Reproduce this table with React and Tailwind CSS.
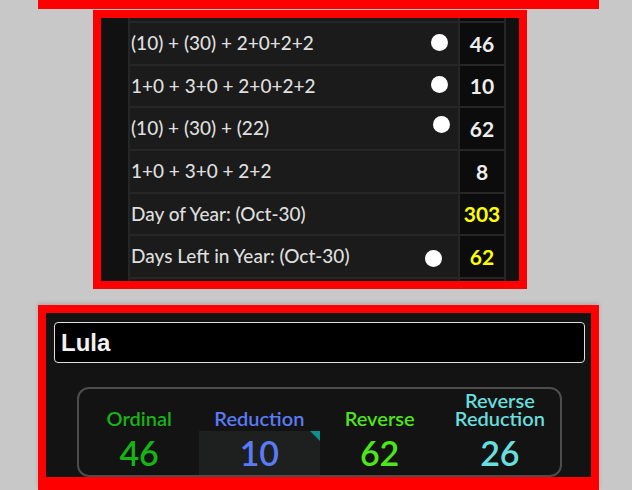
import React from 'react';

const rows = [
  { text: '(10) + (30) + 2+0+2+2', value: '46', dot: 'mr-[10px] -mt-[2px]' },
  { text: '1+0 + 3+0 + 2+0+2+2', value: '10', dot: 'mr-[10px] -mt-[2px]' },
  { text: '(10) + (30) + (22)', value: '62', dot: 'mr-[8px] -mt-[8px]' },
  { text: '1+0 + 3+0 + 2+2', value: '8' },
  { text: 'Day of Year: (Oct-30)', value: '303', yellow: true },
  { text: 'Days Left in Year: (Oct-30)', value: '62', yellow: true, dot: 'mr-[16px] mt-[4px]' },
];

const ciphers = [
  { label: 'Ordinal', value: '46', color: 'text-[#17b317]' },
  { label: 'Reduction', value: '10', color: 'text-[#5a7bf7]', active: true },
  { label: 'Reverse', value: '62', color: 'text-[#4fe619]' },
  { label: 'Reverse Reduction', value: '26', color: 'text-[#68dede]', twoLine: true },
];

const Row = ({ row }) => (
  <div className="flex h-[42.67px] border-t-2 border-[#262626]">
    <div className="flex flex-1 items-center border-l-2 border-[#262626] bg-[#1b1b1b] pl-[1px]">
      <span className="flex-1 text-[19px] font-medium text-[#dedede]">{row.text}</span>
      {row.dot && <span className={`h-[17px] w-[17px] rounded-full bg-white ${row.dot}`}></span>}
    </div>
    <div
      className={`flex w-[48px] items-center justify-center border-l-2 border-r-2 border-[#262626] bg-[#0c0c0c] text-[21px] font-bold ${
        row.yellow ? 'text-[#ffff00]' : 'text-[#eeeeee]'
      }`}
    >
      {row.value}
    </div>
  </div>
);

const App = () => {
  return (
    <div className="min-h-[490px] w-[632px] overflow-hidden bg-[#c8c8c8] font-['Lato',sans-serif]">
      {/* bottom edge of the box above */}
      <div className="ml-[38px] h-[9px] w-[561px] bg-[#ff0000]"></div>

      {/* gematria table */}
      <div className="ml-[93px] mt-[1px] w-[434px] border-8 border-[#ff0000]">
        <div className="flex h-[263px] overflow-hidden bg-[#131313]">
          <div className="w-[27px] bg-[#111111]"></div>
          <div className="flex w-[378px] flex-col">
            <div className="flex h-[3px]">
              <div className="flex-1 border-l-2 border-[#262626] bg-[#1b1b1b]"></div>
              <div className="w-[48px] border-x-2 border-[#262626] bg-[#0c0c0c]"></div>
            </div>
            {rows.map((row, i) => (
              <Row key={i} row={row} />
            ))}
            <div className="flex h-[4px] border-t-2 border-[#262626]">
              <div className="flex-1 border-l-2 border-[#262626] bg-[#1b1b1b]"></div>
              <div className="w-[48px] border-x-2 border-[#262626] bg-[#0c0c0c]"></div>
            </div>
          </div>
          <div className="flex-1 bg-[#111111]"></div>
        </div>
      </div>

      {/* phrase + cipher results */}
      <div className="ml-[38px] mt-[16px] w-[561px] border-8 border-b-[13px] border-[#ff0000] shadow-[0_-2px_4px_rgba(0,0,0,0.15)]">
        <div className="h-[164px] bg-[#131313] pt-[9px]">
          <div className="ml-[8px] flex h-[41px] w-[531px] items-center rounded-[4px] border border-[#e0e0e0] bg-black pl-[6px] font-['Liberation_Sans',Arial,sans-serif] text-[24px] font-bold text-[#f2f2f2]">
            Lula
          </div>
          <div className="ml-[31px] mt-[24px] flex h-[90px] w-[485px] rounded-[12px] border-2 border-[#4d4d4d]">
            {ciphers.map((c) => (
              <div key={c.label} className={`flex flex-1 flex-col items-center ${c.color}`}>
                <div className="flex h-[38px] items-end justify-center text-center text-[20px] font-semibold leading-[18px]">
                  {c.twoLine ? (
                    <span>
                      Reverse
                      <br />
                      Reduction
                    </span>
                  ) : (
                    <span>{c.label}</span>
                  )}
                </div>
                <div
                  className={`relative mt-[4px] flex h-[44px] w-full items-center justify-center text-[34px] font-semibold leading-[44px] ${
                    c.active ? 'bg-[#1e2020]' : ''
                  }`}
                >
                  {c.value}
                  {c.active && (
                    <span className="absolute right-0 top-0 h-0 w-0 border-l-[10px] border-t-[10px] border-l-transparent border-t-[#0e8f8f]"></span>
                  )}
                </div>
              </div>
            ))}
          </div>
        </div>
      </div>
    </div>
  );
};

export default App;
